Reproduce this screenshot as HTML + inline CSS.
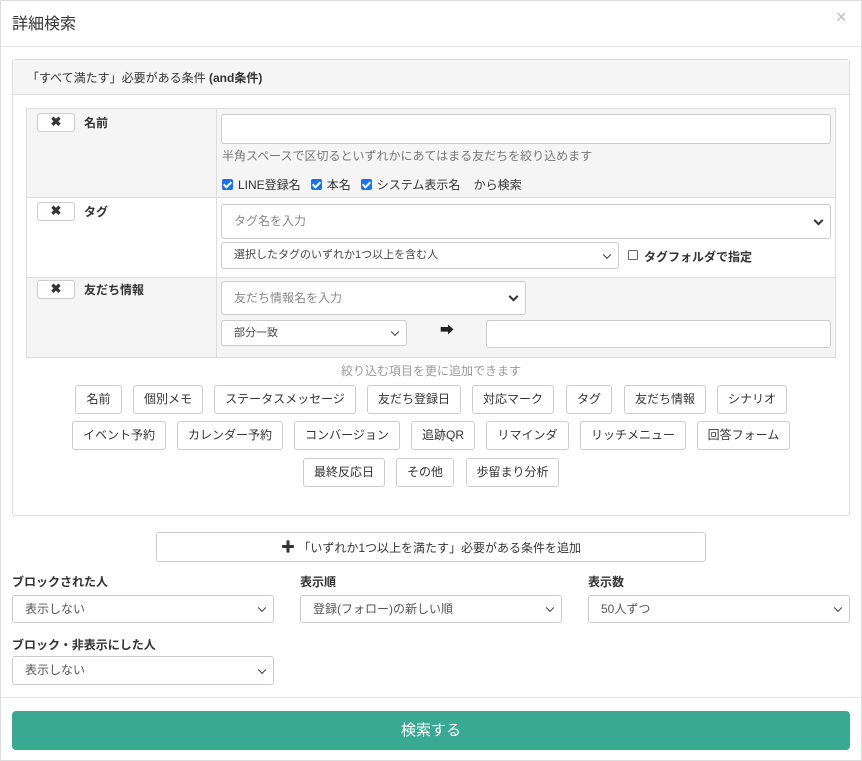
<!DOCTYPE html>
<html><head><meta charset="utf-8"><style>
*{box-sizing:border-box;margin:0;padding:0}
body{width:862px;height:761px;background:#fff;font-family:"Liberation Sans","Noto Sans CJK JP",sans-serif;color:#333;position:relative;overflow:hidden;font-size:12px}
.a{position:absolute}
.bx{position:absolute;border:1px solid #ccc;border-radius:3px;background:#fff}
.btn{position:absolute;border:1px solid #ccc;border-radius:3px;background:#fff;text-align:center;line-height:26px;font-size:12px;color:#333;height:29px}
.sel{position:absolute;border:1px solid #ccc;border-radius:3px;background:#fff;color:#555;padding-left:12px;font-size:12px}
.chev{position:absolute;right:8px;top:50%;width:7px;height:7px;border-right:2px solid #333;border-bottom:2px solid #333;transform:translateY(-70%) rotate(45deg)}
.cb{display:inline-block;width:11px;height:11px;background:#1a73e8;border-radius:2px;vertical-align:-1px;position:relative;margin-right:5px}
.cb:after{content:"";position:absolute;left:3px;top:1px;width:3px;height:6px;border-right:2px solid #fff;border-bottom:2px solid #fff;transform:rotate(45deg)}
b{font-weight:bold}
</style></head><body>
<div class="a" style="left:0;top:0;width:862px;height:761px;border:1px solid #ddd"></div>
<div class="a" style="left:12px;top:10px;font-size:16px;color:#333">詳細検索</div>
<div class="a" style="left:836px;top:7px;font-size:18px;color:#bbb">×</div>
<div class="a" style="left:1px;top:46px;width:860px;height:1px;background:#e5e5e5"></div>

<div class="a" style="left:12px;top:59px;width:838px;height:457px;border:1px solid #ddd;border-radius:3px"></div>
<div class="a" style="left:13px;top:60px;width:836px;height:35px;background:#f5f5f5;border-bottom:1px solid #ddd"></div>
<div class="a" style="left:27px;top:69px;font-size:12px">「すべて満たす」必要がある条件 <b>(and条件)</b></div>

<div class="a" style="left:26px;top:108px;width:810px;height:250px;border:1px solid #ddd"></div>
<div class="a" style="left:27px;top:109px;width:808px;height:88px;background:#f5f5f5"></div>
<div class="a" style="left:27px;top:197px;width:808px;height:1px;background:#ddd"></div>
<div class="a" style="left:27px;top:277px;width:808px;height:1px;background:#ddd"></div>
<div class="a" style="left:27px;top:278px;width:808px;height:79px;background:#f5f5f5"></div>
<div class="a" style="left:216px;top:109px;width:1px;height:248px;background:#ddd"></div>

<div class="bx" style="left:37px;top:113px;width:38px;height:19px;text-align:center;line-height:16px;font-weight:bold;font-size:13px">✖</div>
<div class="a" style="left:84px;top:114px;font-weight:bold">名前</div>
<div class="bx" style="left:37px;top:202px;width:38px;height:19px;text-align:center;line-height:16px;font-weight:bold;font-size:13px">✖</div>
<div class="a" style="left:84px;top:203px;font-weight:bold">タグ</div>
<div class="bx" style="left:37px;top:280px;width:38px;height:19px;text-align:center;line-height:16px;font-weight:bold;font-size:13px">✖</div>
<div class="a" style="left:84px;top:281px;font-weight:bold">友だち情報</div>

<div class="bx" style="left:221px;top:114px;width:610px;height:30px"></div>
<div class="a" style="left:222px;top:147px;color:#777">半角スペースで区切るといずれかにあてはまる友だちを絞り込めます</div>
<div class="a" style="left:222px;top:176px;color:#333"><span class="cb"></span>LINE登録名 &nbsp; <span class="cb"></span>本名 &nbsp; <span class="cb"></span>システム表示名 &nbsp;&nbsp; から検索</div>

<div class="sel" style="left:221px;top:204px;width:610px;height:35px;line-height:33px;color:#888">タグ名を入力<span class="chev"></span></div>
<div class="sel" style="left:221px;top:242px;width:398px;height:27px;line-height:25px;font-size:11px;color:#444">選択したタグのいずれか1つ以上を含む人<span class="chev" style="border-width:1.5px;width:6px;height:6px"></span></div>
<div class="a" style="left:628px;top:250px;width:10px;height:10px;border:1px solid #666;border-radius:1px"></div>
<div class="a" style="left:644px;top:248px;font-weight:bold">タグフォルダで指定</div>

<div class="sel" style="left:221px;top:281px;width:305px;height:34px;line-height:32px;color:#888">友だち情報名を入力<span class="chev"></span></div>
<div class="sel" style="left:221px;top:320px;width:186px;height:26px;line-height:24px;font-size:11px;color:#444">部分一致<span class="chev" style="border-width:1.5px;width:6px;height:6px"></span></div>
<div class="a" style="left:440px;top:320px;font-size:14px;color:#222">➡</div>
<div class="bx" style="left:486px;top:320px;width:345px;height:28px"></div>

<div class="a" style="left:0;top:362px;width:862px;text-align:center;color:#999">絞り込む項目を更に追加できます</div>

<div class="btn" style="left:75px;top:385px;width:47px">名前</div>
<div class="btn" style="left:133px;top:385px;width:70px">個別メモ</div>
<div class="btn" style="left:214px;top:385px;width:142px">ステータスメッセージ</div>
<div class="btn" style="left:367px;top:385px;width:94px">友だち登録日</div>
<div class="btn" style="left:472px;top:385px;width:82px">対応マーク</div>
<div class="btn" style="left:566px;top:385px;width:46px">タグ</div>
<div class="btn" style="left:624px;top:385px;width:82px">友だち情報</div>
<div class="btn" style="left:717px;top:385px;width:70px">シナリオ</div>

<div class="btn" style="left:72px;top:421px;width:94px">イベント予約</div>
<div class="btn" style="left:177px;top:421px;width:106px">カレンダー予約</div>
<div class="btn" style="left:294px;top:421px;width:106px">コンバージョン</div>
<div class="btn" style="left:411px;top:421px;width:64px">追跡QR</div>
<div class="btn" style="left:486px;top:421px;width:83px">リマインダ</div>
<div class="btn" style="left:580px;top:421px;width:106px">リッチメニュー</div>
<div class="btn" style="left:697px;top:421px;width:93px">回答フォーム</div>

<div class="btn" style="left:303px;top:458px;width:82px">最終反応日</div>
<div class="btn" style="left:396px;top:458px;width:58px">その他</div>
<div class="btn" style="left:466px;top:458px;width:93px">歩留まり分析</div>

<div class="btn" style="left:156px;top:532px;width:550px;height:30px;line-height:28px"><b style="font-size:14px">✚</b> 「いずれか1つ以上を満たす」必要がある条件を追加</div>

<div class="a" style="left:12px;top:573px;font-weight:bold">ブロックされた人</div>
<div class="a" style="left:300px;top:573px;font-weight:bold">表示順</div>
<div class="a" style="left:588px;top:573px;font-weight:bold">表示数</div>
<div class="sel" style="left:12px;top:595px;width:262px;height:28px;line-height:26px">表示しない<span class="chev" style="border-width:1.5px;width:6px;height:6px"></span></div>
<div class="sel" style="left:300px;top:595px;width:262px;height:28px;line-height:26px">登録(フォロー)の新しい順<span class="chev" style="border-width:1.5px;width:6px;height:6px"></span></div>
<div class="sel" style="left:588px;top:595px;width:262px;height:28px;line-height:26px">50人ずつ<span class="chev" style="border-width:1.5px;width:6px;height:6px"></span></div>
<div class="a" style="left:12px;top:636px;font-weight:bold">ブロック・非表示にした人</div>
<div class="sel" style="left:12px;top:656px;width:262px;height:29px;line-height:27px">表示しない<span class="chev" style="border-width:1.5px;width:6px;height:6px"></span></div>

<div class="a" style="left:1px;top:697px;width:860px;height:1px;background:#e5e5e5"></div>
<div class="a" style="left:12px;top:711px;width:838px;height:39px;background:#3aa991;border-radius:4px;color:#fff;text-align:center;line-height:39px;font-size:15px">検索する</div>
</body></html>
